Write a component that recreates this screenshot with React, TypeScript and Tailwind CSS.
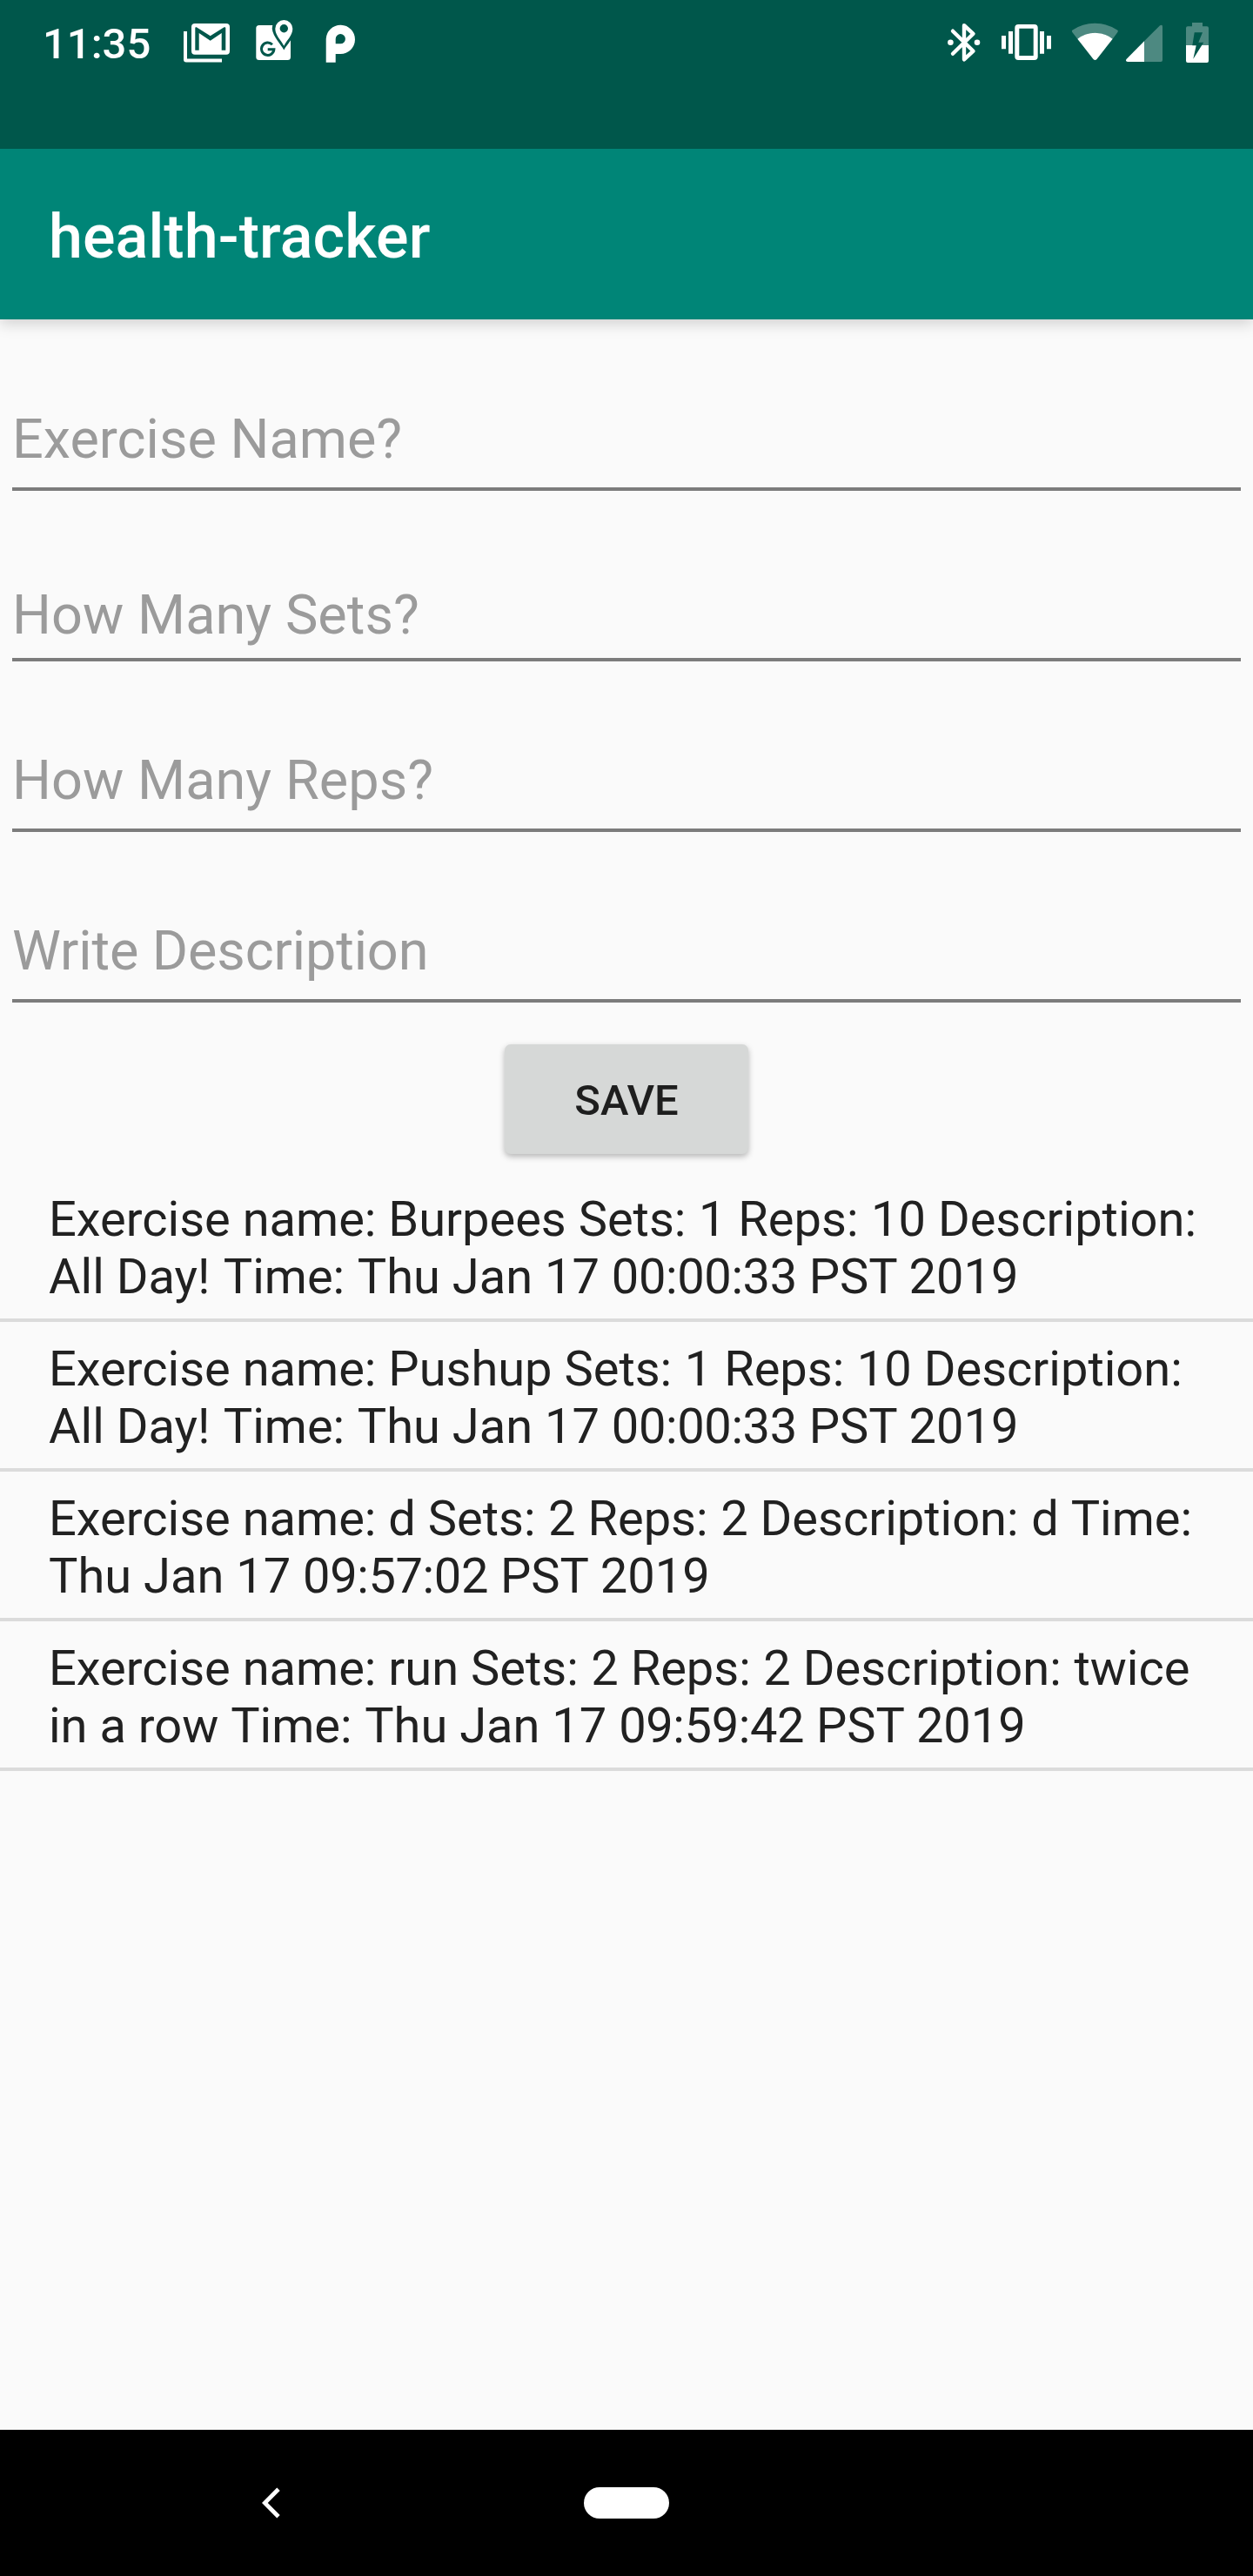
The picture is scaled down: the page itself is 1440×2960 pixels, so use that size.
import React from "react";

const fields = [
  { hint: "Exercise Name?", style: "pb-[6px]" },
  { hint: "How Many Sets?", style: "pb-0 tracking-[0.06px]" },
  { hint: "How Many Reps?", style: "pb-[6px] tracking-[0.06px]" },
  { hint: "Write Description", style: "pb-[6px] tracking-[-0.13px]" },
];

const entries = [
  ["Exercise name: Burpees Sets: 1 Reps: 10 Description:", "All Day! Time: Thu Jan 17 00:00:33 PST 2019"],
  ["Exercise name: Pushup Sets: 1 Reps: 10 Description:", "All Day! Time: Thu Jan 17 00:00:33 PST 2019"],
  ["Exercise name: d Sets: 2 Reps: 2 Description: d Time:", "Thu Jan 17 09:57:02 PST 2019"],
  ["Exercise name: run Sets: 2 Reps: 2 Description: twice", "in a row Time: Thu Jan 17 09:59:42 PST 2019"],
];

function wordSpacing(word: string) {
  if (/^\d\d:\d\d:\d\d$/.test(word)) return "inline-block tracking-[-0.38px]";
  if (word === "PST") return "inline-block -mr-px";
  if (word === "Day!") return "inline-block mr-[1.5px]";
  if (/^(Sets|Reps|Time|Description):$/.test(word)) return "inline-block mr-[0.7px]";
  return "inline-block";
}

function Line({ text }: { text: string }) {
  return (
    <p>
      {text.split(" ").map((word, i) => (
        <React.Fragment key={i}>
          {i > 0 && " "}
          <span className={wordSpacing(word)}>{word}</span>
        </React.Fragment>
      ))}
    </p>
  );
}

function MailIcon() {
  return (
    <svg className="ml-[37px] shrink-0" width="54" height="52" viewBox="211 22 54 52" fill="#fff">
      <path d="M211 36h4v31.6h40v4h-41a3 3 0 0 1-3-3z" />
      <rect x="220" y="27" width="44" height="35.8" rx="4" />
      <path
        d="M224.3 57.8V32.2q0-1.5 1.5-.9l15.9 10 15.9-10q1.7-.6 1.7.9v25.600h-4.600V38l-13 8.700-13-8.700v19.800z"
        fill="#00574b"
      />
    </svg>
  );
}

function MapsIcon() {
  return (
    <svg className="ml-[29px] shrink-0" width="44" height="52" viewBox="294 22 44 52">
      <rect x="294.3" y="29" width="39.7" height="40" rx="3.5" fill="#fff" />
      <path
        d="M326.3 57.500c-3-6-12.500-15-13.600-24.500a13.600 13.600 0 0 1 27.200 0c-1.100 9.500-10.600 18.500-13.600 24.500z"
        fill="#00574b"
      />
      <path
        d="M326.3 52.700c-3.500-6.700-10-12.200-10-19.700a10 10 0 0 1 20 0c0 7.500-6.500 13-10 19.700z"
        fill="#fff"
      />
      <circle cx="326.3" cy="32.7" r="4.7" fill="#00574b" />
      <path d="M312.9 51.200A7.200 7.200 0 1 0 314.900 56.700h-7.200" fill="none" stroke="#00574b" strokeWidth="3" />
    </svg>
  );
}

function ParkingIcon() {
  return (
    <svg className="ml-[36px] shrink-0" width="35" height="52" viewBox="374 22 35 52">
      <path
        fill="#fff"
        fillRule="evenodd"
        d="M374.7 71.700V44.700a16.650 16.650 0 1 1 16.600 17.300h-5.600v9.700zM385.700 50.300h5.600a5.600 5.600 0 1 0-5.600-5.600z"
      />
    </svg>
  );
}

function BluetoothIcon() {
  return (
    <svg className="shrink-0" width="38" height="52" viewBox="1089 22 38 52">
      <path
        d="M1095 35.700L1118.500 58.700 1108 68.300V29.200L1118.500 38.800 1095 61.800"
        fill="none"
        stroke="#fff"
        strokeWidth="4.4"
        strokeLinecap="round"
        strokeLinejoin="round"
      />
      <circle cx="1092.4" cy="48.8" r="3.3" fill="#fff" />
      <circle cx="1123" cy="48.8" r="3.3" fill="#fff" />
    </svg>
  );
}

function VibrateIcon() {
  return (
    <svg className="ml-[24px] shrink-0" width="57" height="52" viewBox="1151 22 57 52" fill="#fff">
      <path
        fillRule="evenodd"
        d="M1170.3 28h18.400a4 4 0 0 1 4 4v33a4 4 0 0 1-4 4h-18.400a4 4 0 0 1-4-4V32a4 4 0 0 1 4-4zM1171.300 32.800v31.200h16.400V32.800z"
      />
      <path d="M1159 36h5v25.700h-5zM1195 36h5v25.700h-5zM1151 41h5v15.300h-5zM1203 41h5v15.300h-5z" />
    </svg>
  );
}

function WifiIcon() {
  return (
    <svg className="ml-[23px] shrink-0" width="55" height="52" viewBox="1231 22 55 52" fill="#fff">
      <path
        fillOpacity=".3"
        d="M1232.3 36.900q-1-1.400.4-2.400Q1244 26.700 1258.300 26.700T1284 34.500q1.400 1 .4 2.400L1278.700 44.700Q1269.500 37.700 1258.300 37.700T1238.300 44.700z"
      />
      <path d="M1238.3 44.700Q1247 37.700 1258.500 37.700T1278.700 44.700L1260.500 67.900q-2 2-4 0z" />
    </svg>
  );
}

function SignalIcon() {
  return (
    <svg className="ml-[8px] shrink-0" width="42" height="52" viewBox="1294 22 42 52" fill="#fff">
      <path fillOpacity=".3" d="M1315 47.300L1332.800 29.500q3.200-1.800 3.200 1.200V69q0 2-2 2H1315z" />
      <path d="M1315 47.300V71H1296q-3-.2-1.500-3z" />
    </svg>
  );
}

function BatteryIcon() {
  return (
    <svg className="ml-[27px] shrink-0" width="26" height="52" viewBox="1363 22 26 52" fill="#fff">
      <path
        fillOpacity=".3"
        d="M1370 26h12v4.300h5q2 0 2 2V52h-7.800l2.100-3.300h-6l4.700-11.400h-9.300l-2.400 15H1363V32.300q0-2 2-2h5z"
      />
      <path d="M1363 52h7.300v.3h4.400l-3.400 15.400L1381.200 52H1389v18q0 2-2 2h-22q-2 0-2-2z" />
    </svg>
  );
}

export default function App() {
  return (
    <div className="flex h-[2960px] w-[1440px] flex-col overflow-hidden bg-[#fafafa] font-['Roboto',sans-serif] text-[#212121]">
      <header className="relative z-10 shrink-0 shadow-[0_5px_16px_rgba(0,0,0,0.17)]">
        <div className="flex h-[171px] items-start justify-between bg-[#00574b] pt-[22px] pr-[51px] pl-[49px]">
          <div className="flex items-start">
            <span className="w-[125px] whitespace-nowrap text-[49px] leading-[58px] font-medium text-white">11:35</span>
            <MailIcon />
            <MapsIcon />
            <ParkingIcon />
          </div>
          <div className="flex items-start">
            <BluetoothIcon />
            <VibrateIcon />
            <WifiIcon />
            <SignalIcon />
            <BatteryIcon />
          </div>
        </div>
        <div className="flex h-[196px] items-center bg-[#008577] px-14 pt-[6px]">
          <h1 className="text-[70px] leading-[82px] font-medium tracking-[0.1px] text-white">health-tracker</h1>
        </div>
      </header>

      <main className="flex grow flex-col">
        <form className="flex flex-col items-center px-[14px]" onSubmit={(e) => e.preventDefault()}>
          {fields.map((f) => (
            <label key={f.hint} className="flex h-[196px] w-full flex-col justify-end first:h-[197px]">
              <input
                placeholder={f.hint}
                className={`w-full border-b-4 border-[#7c7c7c] bg-transparent text-[63px] leading-[98px] outline-none placeholder:text-[#9b9b9b] placeholder:opacity-100 ${f.style}`}
              />
            </label>
          ))}
          <button
            type="button"
            className="mt-[48px] h-[126px] w-[280px] rounded-[7px] bg-[#d6d8d7] pt-[3px] text-[49px] leading-[58px] font-medium text-[#1e1e1e] shadow-[0_3px_7px_rgba(0,0,0,0.28)]"
          >
            SAVE
          </button>
        </form>

        <ul className="mt-[21px]">
          {entries.map((lines) => (
            <li
              key={lines[0]}
              className="h-[172px] border-b-4 border-[#dbdbdb] px-14 pt-[21px] text-[56px] leading-[66px] whitespace-nowrap"
            >
              {lines.map((line) => (
                <Line key={line} text={line} />
              ))}
            </li>
          ))}
        </ul>
      </main>

      <nav className="flex h-[168px] shrink-0 items-center bg-black pl-[301px]">
        <svg width="22" height="36" viewBox="0 0 22 36" fill="none" stroke="#fff" strokeWidth="4.8">
          <path d="M19 2.300L3.300 18 19 33.700" />
        </svg>
        <div className="ml-[348px] h-[36px] w-[98px] rounded-full bg-white" />
      </nav>
    </div>
  );
}
